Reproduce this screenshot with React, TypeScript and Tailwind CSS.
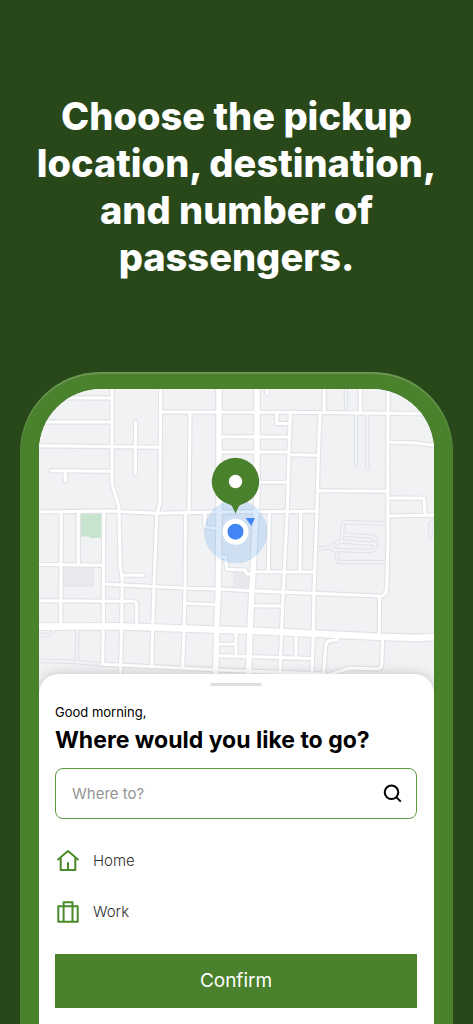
import React from "react";

type Road = { d: string; w?: number };

const lanes: Road[] = [
  { d: "M346 380V407" },
  { d: "M356 414V465" },
  { d: "M367.3 414V468" },
  { d: "M434 520L430.500 524V537" },
  { d: "M387 523.500L346 522.300Q343 522.300 342.700 525L341.700 540.700L330 547.300L317.300 549" },
  { d: "M343 534.500L370 536.500Q376.500 537 376 543Q376 550.500 370 551L338 550L330 547.300" },
  { d: "M341 541.500L374 543.800" },
  { d: "M332 549L336 551L338 562H387" },
  { d: "M36 635H50L54 630" },
  { d: "M77.3 630L77 662" },
  { d: "M36 660.700L73 661.700L103 664.500" },
];

const streets: Road[] = [
  { d: "M50 397.700L112 398" },
  { d: "M40 422H112" },
  { d: "M36 445.700L161 447.300" },
  { d: "M51.700 470.700L112 471.300M65.300 471V481" },
  { d: "M135.700 422L135.300 474" },
  { d: "M112 380V473Q111.500 485 113.500 489L119 507L120 563L122.300 580L121.700 627L120 690" },
  { d: "M160.700 380L160 503L156.700 515L154 587L152.700 627L151.700 667" },
  { d: "M190 413L189 512" },
  { d: "M185.700 513L185 590L184 630L182.700 668" },
  { d: "M324.300 380V412M360.300 380V412" },
  { d: "M388.300 380L387.700 460L388 543L386.700 587Q387 595 379.500 597L379.300 637" },
  { d: "M290.300 413L289 453L287.300 510L283.300 590L281.700 627L280 672" },
  { d: "M320 413L318.300 457L317 510L314 590L313.300 633L311.700 680" },
  { d: "M264.500 380L267.300 394" },
  { d: "M276.700 413V423.500H290" },
  { d: "M161 412L325 412.500L440 414" },
  { d: "M219 436.700L290 437" },
  { d: "M219 452H289" },
  { d: "M289 454.700L318 455.300" },
  { d: "M257 482.300H288" },
  { d: "M319 490.700L388 491.300" },
  { d: "M36 512L110 511L156.700 513.300L216.700 512L317 511.300" },
  { d: "M389 442.300L413 442.700L440 446" },
  { d: "M389 498L424 498.300L425 515" },
  { d: "M389 516L440 515" },
  { d: "M61.300 512L60.700 627" },
  { d: "M78.300 512V565" },
  { d: "M103.700 512L103.300 627L102.700 664" },
  { d: "M36 564.300L103 565.300" },
  { d: "M122 575.300H143" },
  { d: "M104 584L123 585L187 588.300L220 589L250 590.700L379 596" },
  { d: "M36 600.700L133 601.300Q137 601.300 136.700 605V626" },
  { d: "M185 603.300L217 604.700" },
  { d: "M205 513V527L219 529" },
  { d: "M220 557H225.700L226.700 569.300L245 570L247 574H252" },
  { d: "M269.300 512L268.300 572M300.700 512L300 572" },
  { d: "M254 571.700L315 572" },
  { d: "M252 605.700L282 606" },
  { d: "M218 644.300H236M236 632V656" },
  { d: "M218 655.700L311 658.500" },
  { d: "M103 664.300L153 666.700L218 670L324 674" },
  { d: "M296 634V657" },
  { d: "M323 680L325.700 646.700Q326 641 331 640.500L337 640L339 636" },
  { d: "M382.700 638L381.700 664Q381.500 669 377 669L350 668L328 675" },
];

const avenues: Road[] = [
  { d: "M219 380V510L218.300 590L216.700 627L215.300 690", w: 5.4 },
  { d: "M257 380V500L255 530L252 590L250 630L248 690", w: 5.6 },
  { d: "M30 626.700L117 626.300L250 630.700L379 636.700L417 638L440 636.500", w: 6.6 },
];

function Roads({ roads, stroke, extra = 0, width = 3.1 }: { roads: Road[]; stroke: string; extra?: number; width?: number }) {
  return (
    <g fill="none" stroke={stroke} strokeLinecap="round" strokeLinejoin="round">
      {roads.map((r) => (
        <path key={r.d} d={r.d} strokeWidth={(r.w ?? width) + extra} />
      ))}
    </g>
  );
}

function CityMap() {
  return (
    <svg
      viewBox="39 389 395 305"
      preserveAspectRatio="xMidYMin slice"
      className="block h-[305px] w-full bg-[#f1f2f4]"
      role="img"
      aria-label="Map showing the pickup point"
    >
      <path d="M81 513h20.500v25H90l-1-1.500h-8z" fill="#c8e4cf" />
      <path d="M63.500 567H94v20H63.500zM233 571h17v16h-17z" fill="#e8e9ed" />
      <Roads roads={lanes} stroke="#dfe1e5" extra={2} width={2.4} />
      <Roads roads={streets} stroke="#e0e2e6" extra={2.2} />
      <Roads roads={avenues} stroke="#e0e2e6" extra={2.2} />
      <Roads roads={lanes} stroke="#f1f2f4" width={2.4} />
      <Roads roads={streets} stroke="#fff" />
      <Roads roads={avenues} stroke="#fff" />
      <circle cx="235.700" cy="531.700" r="31.700" fill="#3d8de4" opacity=".19" />
      <path d="M245.700 518H255L251.300 526z" fill="#4285f4" />
      <circle cx="235.500" cy="531.700" r="13" fill="#fff" />
      <circle cx="235.500" cy="531.700" r="8" fill="#4285f4" />
      <path
        fill="#4a812c"
        d="M235.500 513.500L232.500 507Q231.500 504.900 229.500 504.500A23.700 23.700 0 1 1 241.500 504.500Q239.500 504.900 238.500 507Z"
      />
      <circle cx="235.500" cy="481.500" r="6.700" fill="#fff" />
    </svg>
  );
}

function HomeIcon() {
  return (
    <svg viewBox="0 0 24 24" className="size-6" fill="none" stroke="#4a8a2a" strokeWidth="2" strokeLinejoin="round" aria-hidden="true">
      <path d="M1.500 11L12 2l10.500 9M4.700 8.800v12.300h14.600V8.800M12 13.300v7.800" />
    </svg>
  );
}

function WorkIcon() {
  return (
    <svg viewBox="0 0 24 24" className="size-6" fill="none" stroke="#4a8a2a" strokeWidth="2" strokeLinejoin="round" aria-hidden="true">
      <path d="M2.300 6.300h19.400v15.400H2.300zM7.600 21.700V2.300h8.900v19.400" />
    </svg>
  );
}

function SearchIcon() {
  return (
    <svg viewBox="0 0 20 20" className="size-5" fill="none" stroke="#000" strokeWidth="2" aria-hidden="true">
      <circle cx="9.500" cy="8.300" r="6.800" />
      <path d="M14.200 13.100L18.800 17.600" />
    </svg>
  );
}

export default function App() {
  return (
    <main className="flex min-h-screen flex-col overflow-hidden bg-[#284819] font-['Inter',sans-serif]">
      <h1 className="px-6 pt-[93px] pb-[91px] text-center text-[38px] leading-[47px] font-extrabold text-white">
        Choose the pickup
        <br />
        location, destination,
        <br />
        and number of
        <br />
        passengers.
      </h1>
      <section className="mx-5 flex grow flex-col rounded-t-[80px] bg-[#4a812c] px-[19px] pt-[17px] shadow-[inset_0_2px_1px_#ffffff30]">
        <div className="flex grow flex-col overflow-hidden rounded-t-[62px] bg-[#f1f2f4]">
          <CityMap />
          <div className="relative -mt-5 flex grow flex-col rounded-t-[20px] bg-white pt-[9px] pr-[17px] pb-[17px] pl-4 shadow-[0_0_12px_#00000030]">
            <div className="h-[3px] w-[52px] self-center rounded-full bg-[#dedede]" />
            <p className="mt-4 text-[13px] leading-5 text-black">Good morning,</p>
            <h2 className="mt-[2px] text-[23px] leading-8 font-bold text-black">Where would you like to go?</h2>
            <form className="mt-3 flex h-[51px] items-center rounded-lg border border-[#5d9843] pr-[14px] pl-4">
              <input
                type="text"
                aria-label="Where to?"
                placeholder="Where to?"
                className="h-6 min-w-0 grow bg-transparent text-[15px] text-black outline-none placeholder:text-[#949494]"
              />
              <button type="button" aria-label="Search">
                <SearchIcon />
              </button>
            </form>
            <button type="button" className="mt-[30px] flex items-center gap-[13px] pl-px text-left text-[15px] leading-6 font-light text-[#303030]">
              <HomeIcon />
              Home
            </button>
            <button type="button" className="mt-[27px] flex items-center gap-[13px] pl-px text-left text-[15px] leading-6 font-light text-[#303030]">
              <WorkIcon />
              Work
            </button>
            <button type="button" className="mt-[30px] h-[54px] bg-[#4a812c] text-[19px] text-white">
              Confirm
            </button>
          </div>
        </div>
      </section>
    </main>
  );
}
